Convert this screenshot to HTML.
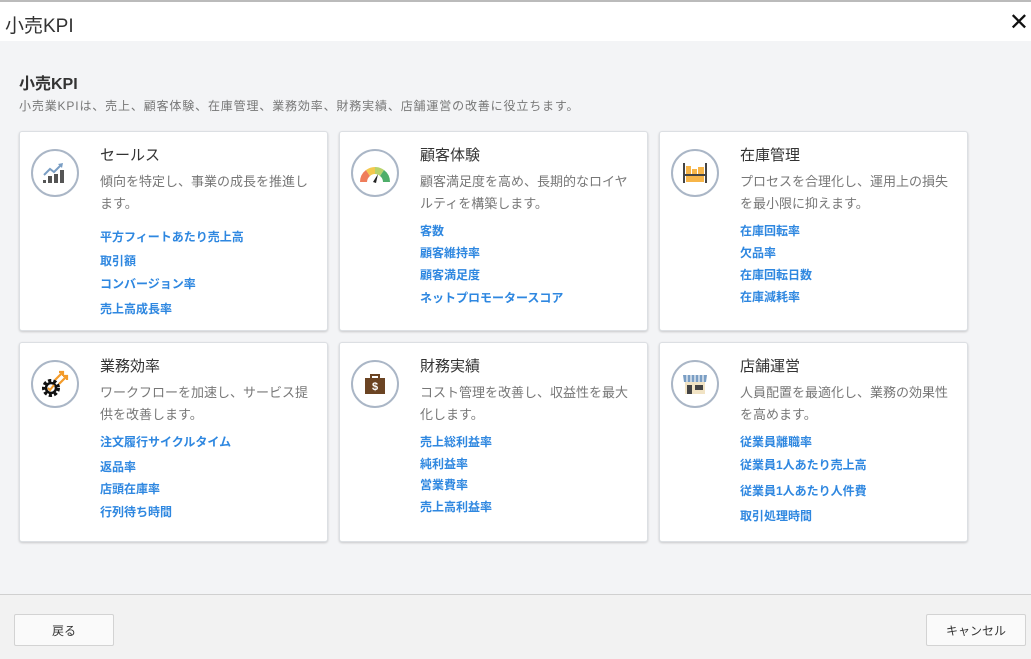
<!DOCTYPE html>
<html><head><meta charset="utf-8"><style>
*{margin:0;padding:0;box-sizing:border-box}
body{width:1031px;height:659px;position:relative;background:#f3f4f6;font-family:"Liberation Sans","Noto Sans CJK JP",sans-serif;overflow:hidden}
.hdr{position:absolute;left:0;top:0;width:1031px;height:41px;background:#fff;border-top:2px solid #bbb}
.hdr .t{position:absolute;left:5px;top:9px;font-size:19px;color:#333}
.hdr .x{position:absolute;right:2px;top:6px;font-size:24px;color:#111}
h1{position:absolute;left:19px;top:70px;font-size:16px;font-weight:bold;color:#333}
.sub{position:absolute;left:19px;top:97px;font-size:12px;color:#777;letter-spacing:.85px}
.card{position:absolute;width:309px;height:200px;background:#fff;border:1px solid #dcdfe3;border-radius:3px;box-shadow:0 1px 2px rgba(0,0,0,.18)}
.ic{position:absolute;left:11px;top:17px;width:48px;height:48px;border:2px solid #aab6c6;border-radius:50%;display:flex;align-items:center;justify-content:center}
.ti{position:absolute;left:80px;top:12px;font-size:15px;color:#333}
.de{position:absolute;left:80px;top:39px;width:212px;font-size:13px;color:#777;line-height:22px}
.l{position:absolute;left:80px;font-size:12px;font-weight:bold;color:#2e87e0}
.sep{position:absolute;left:0;top:594px;width:1031px;height:1px;background:#d0d0d0}
.ftr{position:absolute;left:0;top:595px;width:1031px;height:64px;background:#f2f2f2}
.btn{position:absolute;top:614px;height:32px;border:1px solid #d3d3d3;border-radius:2px;background:#fafafa;font-size:12px;color:#333;display:flex;align-items:center;justify-content:center}
</style></head><body>
<div class="hdr"><div class="t">小売KPI</div><div class="x">✕</div></div>
<h1>小売KPI</h1>
<div class="sub">小売業KPIは、売上、顧客体験、在庫管理、業務効率、財務実績、店舗運営の改善に役立ちます。</div>

<div class="card" style="left:19px;top:131px">
<div class="ic"><svg width="28" height="24" viewBox="0 0 28 24"><path d="M3 14 L9 8 L13 11 L20 4" stroke="#7a9ec4" stroke-width="2" fill="none"/><path d="M17 3 L22 2 L21 7" fill="#7a9ec4"/><rect x="2" y="19" width="3" height="3" fill="#555"/><rect x="7" y="15" width="4" height="7" fill="#555"/><rect x="13" y="13" width="4" height="9" fill="#555"/><rect x="19" y="9" width="4" height="13" fill="#555"/></svg></div>
<div class="ti">セールス</div><div class="de">傾向を特定し、事業の成長を推進します。</div>
<div class="l" style="top:96px">平方フィートあたり売上高</div><div class="l" style="top:120px">取引額</div><div class="l" style="top:143px">コンバージョン率</div><div class="l" style="top:168px">売上高成長率</div></div>

<div class="card" style="left:339px;top:131px">
<div class="ic"><svg width="34" height="22" viewBox="0 0 34 22"><path d="M2 20 A15 15 0 0 1 8 8 L12 14 A8 8 0 0 0 9 20Z" fill="#ef7d5b"/><path d="M8 8 A15 15 0 0 1 17 5 L17 12 A8 8 0 0 0 12 14Z" fill="#f4c84e"/><path d="M17 5 A15 15 0 0 1 26 8 L22 14 A8 8 0 0 0 17 12Z" fill="#b7d36b"/><path d="M26 8 A15 15 0 0 1 32 20 L25 20 A8 8 0 0 0 22 14Z" fill="#4fae6a"/><path d="M15 20 L20 12 L18 21Z" fill="#222"/></svg></div>
<div class="ti">顧客体験</div><div class="de">顧客満足度を高め、長期的なロイヤルティを構築します。</div>
<div class="l" style="top:90px">客数</div><div class="l" style="top:112px">顧客維持率</div><div class="l" style="top:134px">顧客満足度</div><div class="l" style="top:157px">ネットプロモータースコア</div></div>

<div class="card" style="left:659px;top:131px">
<div class="ic"><svg width="26" height="22" viewBox="0 0 26 22"><rect x="1" y="1" width="2" height="20" fill="#444"/><rect x="23" y="1" width="2" height="20" fill="#444"/><rect x="4" y="4" width="5" height="8" fill="#f7b548"/><rect x="10" y="7" width="5" height="5" fill="#f7b548"/><rect x="16" y="5" width="6" height="7" fill="#f7b548"/><rect x="4" y="14" width="18" height="6" fill="#f7b548"/><rect x="3" y="12" width="20" height="2" fill="#444"/></svg></div>
<div class="ti">在庫管理</div><div class="de">プロセスを合理化し、運用上の損失を最小限に抑えます。</div>
<div class="l" style="top:90px">在庫回転率</div><div class="l" style="top:112px">欠品率</div><div class="l" style="top:134px">在庫回転日数</div><div class="l" style="top:156px">在庫減耗率</div></div>

<div class="card" style="left:19px;top:342px">
<div class="ic"><svg width="28" height="28" viewBox="0 0 28 28"><path d="M14 10 L22 2 M18 2 L22 2 L22 6 M18 14 L26 6 M22 6 L26 6 L26 10" stroke="#f39b2a" stroke-width="2.2" fill="none"/><circle cx="10" cy="18" r="7" fill="none" stroke="#111" stroke-width="4" stroke-dasharray="3 2"/><circle cx="10" cy="18" r="5" fill="none" stroke="#111" stroke-width="2.5"/><path d="M7 18 L9 20 L13 15" stroke="#f39b2a" stroke-width="2" fill="none"/></svg></div>
<div class="ti">業務効率</div><div class="de">ワークフローを加速し、サービス提供を改善します。</div>
<div class="l" style="top:90px">注文履行サイクルタイム</div><div class="l" style="top:115px">返品率</div><div class="l" style="top:137px">店頭在庫率</div><div class="l" style="top:160px">行列待ち時間</div></div>

<div class="card" style="left:339px;top:342px">
<div class="ic"><svg width="22" height="22" viewBox="0 0 22 22"><path d="M7 5 V2 H15 V5" stroke="#6b4423" stroke-width="2" fill="none"/><rect x="1" y="5" width="20" height="16" fill="#6b4423"/><text x="11" y="17" font-size="11" fill="#fff" text-anchor="middle" font-weight="bold" font-family="Liberation Sans">$</text></svg></div>
<div class="ti">財務実績</div><div class="de">コスト管理を改善し、収益性を最大化します。</div>
<div class="l" style="top:90px">売上総利益率</div><div class="l" style="top:112px">純利益率</div><div class="l" style="top:133px">営業費率</div><div class="l" style="top:155px">売上高利益率</div></div>

<div class="card" style="left:659px;top:342px">
<div class="ic"><svg width="26" height="22" viewBox="0 0 26 22"><rect x="3" y="9" width="20" height="12" fill="#f1e3c4"/><path d="M1 2 H25 L24 9 H2Z" fill="#7a9ec4"/><path d="M5 2 V9 M9 2 V9 M13 2 V9 M17 2 V9 M21 2 V9" stroke="#dde6f0" stroke-width="1.5"/><rect x="5" y="12" width="5" height="9" fill="#444"/><rect x="13" y="12" width="8" height="5" fill="#444"/></svg></div>
<div class="ti">店舗運営</div><div class="de">人員配置を最適化し、業務の効果性を高めます。</div>
<div class="l" style="top:90px">従業員離職率</div><div class="l" style="top:113px">従業員1人あたり売上高</div><div class="l" style="top:139px">従業員1人あたり人件費</div><div class="l" style="top:164px">取引処理時間</div></div>

<div class="sep"></div><div class="ftr"></div>
<div class="btn" style="left:14px;width:100px">戻る</div>
<div class="btn" style="left:926px;width:100px">キャンセル</div>
</body></html>
